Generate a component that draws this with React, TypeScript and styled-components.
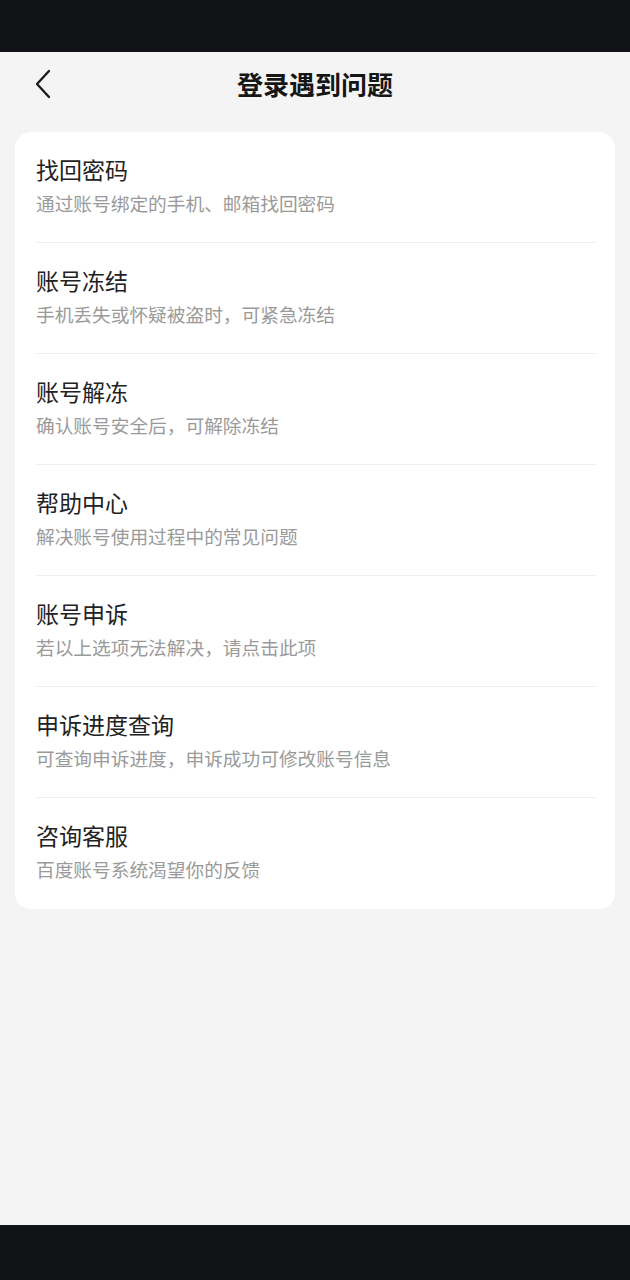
import React from "react";
import styled, { createGlobalStyle } from "styled-components";

const GlobalStyle = createGlobalStyle`
  html, body {
    margin: 0;
    padding: 0;
    background: #f4f4f4;
  }
  body {
    font-family: "Noto Sans CJK SC", "Noto Sans", sans-serif;
  }
`;

const Page = styled.div`
  width: 630px;
  height: 1280px;
  display: flex;
  flex-direction: column;
  background: #f4f4f4;
`;

const SystemBar = styled.div<{ $height: number }>`
  height: ${(p) => p.$height}px;
  flex-shrink: 0;
  background: #111216;
`;

const Header = styled.div`
  height: 64px;
  display: grid;
  grid-template-columns: 70px 1fr 70px;
  align-items: center;
`;

const BackButton = styled.button`
  border: none;
  background: none;
  padding: 0 0 0 34px;
  height: 100%;
  display: flex;
  align-items: center;
  cursor: pointer;
`;

const Title = styled.h1`
  margin: 0;
  text-align: center;
  font-size: 26px;
  line-height: 36px;
  font-weight: 700;
  color: #161616;
`;

const Content = styled.div`
  flex: 1;
  padding: 16px 15px 0;
`;

const Card = styled.div`
  background: #fff;
  border-radius: 16px;
  padding: 0 19px 0 21px;
`;

const Row = styled.div`
  padding: 22px 0 26px;
  border-bottom: 1px solid #f0f0f0;

  &:last-child {
    border-bottom: none;
    padding-bottom: 27px;
  }
`;

const RowTitle = styled.div`
  font-size: 23px;
  line-height: 30px;
  color: #222;
`;

const RowDesc = styled.div`
  margin-top: 6px;
  font-size: 18.7px;
  line-height: 26px;
  color: #9a9a9a;
`;

const items = [
  { title: "找回密码", desc: "通过账号绑定的手机、邮箱找回密码" },
  { title: "账号冻结", desc: "手机丢失或怀疑被盗时，可紧急冻结" },
  { title: "账号解冻", desc: "确认账号安全后，可解除冻结" },
  { title: "帮助中心", desc: "解决账号使用过程中的常见问题" },
  { title: "账号申诉", desc: "若以上选项无法解决，请点击此项" },
  { title: "申诉进度查询", desc: "可查询申诉进度，申诉成功可修改账号信息" },
  { title: "咨询客服", desc: "百度账号系统渴望你的反馈" },
];

const App: React.FC = () => {
  return (
    <Page>
      <GlobalStyle />
      <SystemBar $height={52} />
      <Header>
        <BackButton aria-label="返回">
          <svg width="18" height="30" viewBox="0 0 18 30">
            <path
              d="M15 2 L3 15 L15 28"
              fill="none"
              stroke="#1a1a1a"
              strokeWidth="2.3"
              strokeLinecap="round"
              strokeLinejoin="round"
            />
          </svg>
        </BackButton>
        <Title>登录遇到问题</Title>
        <div />
      </Header>
      <Content>
        <Card>
          {items.map((item) => (
            <Row key={item.title}>
              <RowTitle>{item.title}</RowTitle>
              <RowDesc>{item.desc}</RowDesc>
            </Row>
          ))}
        </Card>
      </Content>
      <SystemBar $height={55} />
    </Page>
  );
};

export default App;
